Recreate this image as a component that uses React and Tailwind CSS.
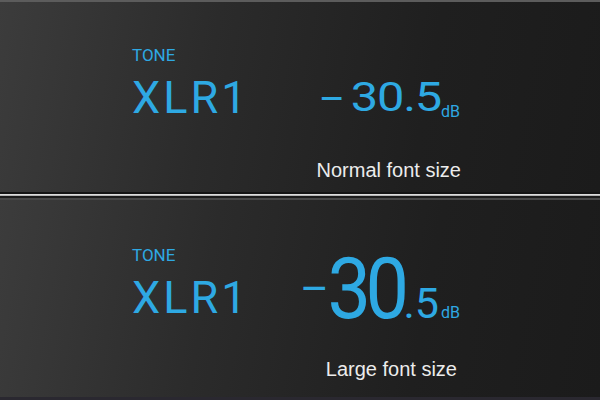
import React from "react";

const panelBg =
  "bg-[linear-gradient(100deg,#3c3c3c_0%,#2b2b2b_35%,#1f1f1f_70%,#1b1b1b_100%)]";

const App = () => {
  return (
    <div className="w-[600px] h-[400px] flex flex-col bg-[#1b1b1b] overflow-hidden">
      {/* Normal font size panel */}
      <div className={`h-[192px] border-t-2 border-[#5c5c5c] pl-[132px] pt-[45px] ${panelBg}`}>
        <div className="w-[329px]">
          <div className="font-['Roboto',sans-serif] text-[17px] leading-none text-[#2ea9e3]">TONE</div>
          <div className="mt-[11px] flex items-end justify-between font-['Roboto',sans-serif] text-[#2ea9e3]">
            <div className="text-[45px] leading-none tracking-[3px]">XLR1</div>
            <div className="mr-[1px] text-[40px] leading-none">
              <span className="mr-[22px] align-[-2px]">–</span>
              <span className="inline-block origin-right scale-x-[1.22] tracking-[-1px]">30.5</span>
              <span className="text-[16px] align-[-6px]">dB</span>
            </div>
          </div>
          <div className="mt-[40px] text-right font-['Liberation_Sans',sans-serif] text-[20px] leading-none text-[#ececec]">
            Normal font size
          </div>
        </div>
      </div>

      {/* separator */}
      <div className="h-[2px] bg-[#141414]" />
      <div className="h-[1px] bg-[#dcdcdc]" />
      <div className="h-[1px] bg-[#b4b4b4]" />
      <div className="h-[2px] bg-[#1c1c1c]" />
      <div className="h-[2px] bg-[#484848]" />

      {/* Large font size panel */}
      <div className={`flex-1 pl-[132px] pt-[46px] border-b-[3px] border-[#2a2830] ${panelBg}`}>
        <div className="w-[329px]">
          <div className="flex items-end justify-between font-['Roboto',sans-serif] text-[#2ea9e3]">
            <div className="flex flex-col pb-[12px]">
              <div className="text-[17px] leading-none">TONE</div>
              <div className="mt-[11px] text-[45px] leading-none tracking-[3px]">XLR1</div>
            </div>
            <div className="mr-[1px] text-[86px] leading-none">
              <span className="mr-[-10px] text-[44px] align-[14px]">–</span>
              <span className="inline-block origin-right scale-x-[0.9] tracking-[-6px]">30</span>
              <span className="text-[43px]">.5</span>
              <span className="ml-[2px] text-[16px]">dB</span>
            </div>
          </div>
          <div className="mt-[27px] pr-[4px] text-right font-['Liberation_Sans',sans-serif] text-[20px] leading-none text-[#ececec]">
            Large font size
          </div>
        </div>
      </div>
    </div>
  );
};

export default App;
